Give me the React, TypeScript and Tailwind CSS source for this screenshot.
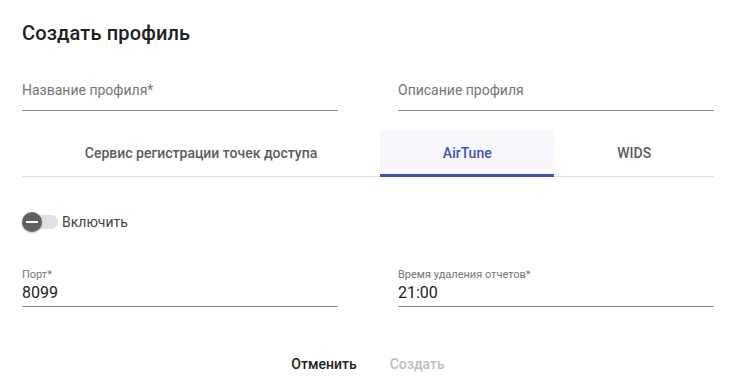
export default function App() {
  return (
    <div className="w-[737px] h-[390px] bg-white pl-[22px] pr-[23px] pt-[18px] text-[#212121]" style={{ fontFamily: "Roboto, 'Noto Sans', sans-serif" }}>
      <h2 className="text-[20px] leading-[30px] font-medium tracking-[0.15px] text-[#212121]">Создать профиль</h2>

      <div className="mt-[32px] grid grid-cols-2 gap-x-[60px]">
        <div className="border-b border-[#8f8f8f] pb-[10px] text-[14px] leading-[20px] text-[#757575]">Название профиля*</div>
        <div className="border-b border-[#8f8f8f] pb-[10px] text-[14px] leading-[20px] text-[#757575]">Описание профиля</div>
      </div>

      <div className="mt-[19px] flex h-[47px] border-b border-[#e0e0e0] text-[14px] font-medium">
        <div className="flex flex-auto items-center justify-center px-[24px] text-[#5c5c5c]">Сервис регистрации точек доступа</div>
        <div className="relative flex flex-auto items-center justify-center bg-[#f7f7fc] px-[24px] text-[#3f51b5]">
          AirTune
          <div className="absolute bottom-[-1px] left-0 right-0 h-[3px] bg-[#3f51b5]" />
        </div>
        <div className="flex flex-auto items-center justify-center px-[24px] text-[#5c5c5c]">WIDS</div>
      </div>

      <div className="mt-[35px] flex h-[20px] items-center">
        <div className="relative h-[20px] w-[36px]">
          <div className="absolute left-[6px] top-[3px] h-[14px] w-[30px] rounded-full bg-[#e0e0e0]" />
          <div className="absolute left-0 top-0 flex h-[20px] w-[20px] items-center justify-center rounded-full bg-[#616161] shadow-[0_1px_2px_rgba(0,0,0,0.3)]">
            <div className="h-[2px] w-[12px] bg-white" />
          </div>
        </div>
        <span className="ml-[4px] text-[14px] leading-[20px] text-[#424242]">Включить</span>
      </div>

      <div className="mt-[36px] grid grid-cols-2 gap-x-[60px]">
        <div className="border-b border-[#8f8f8f] pb-[3px]">
          <div className="text-[11px] leading-[14px] text-[#757575]">Порт*</div>
          <div className="mt-[1px] text-[16px] leading-[20px] text-[#212121]">8099</div>
        </div>
        <div className="border-b border-[#8f8f8f] pb-[3px]">
          <div className="text-[11px] leading-[14px] text-[#757575]">Время удаления отчетов*</div>
          <div className="mt-[1px] text-[16px] leading-[20px] text-[#212121]">21:00</div>
        </div>
      </div>

      <div className="mt-[47px] flex justify-center gap-[1px] text-[14px] leading-[20px] font-medium">
        <button className="px-[16px] text-[#212121]">Отменить</button>
        <button className="px-[16px] text-[#bdbdbd]">Создать</button>
      </div>
    </div>
  );
}
